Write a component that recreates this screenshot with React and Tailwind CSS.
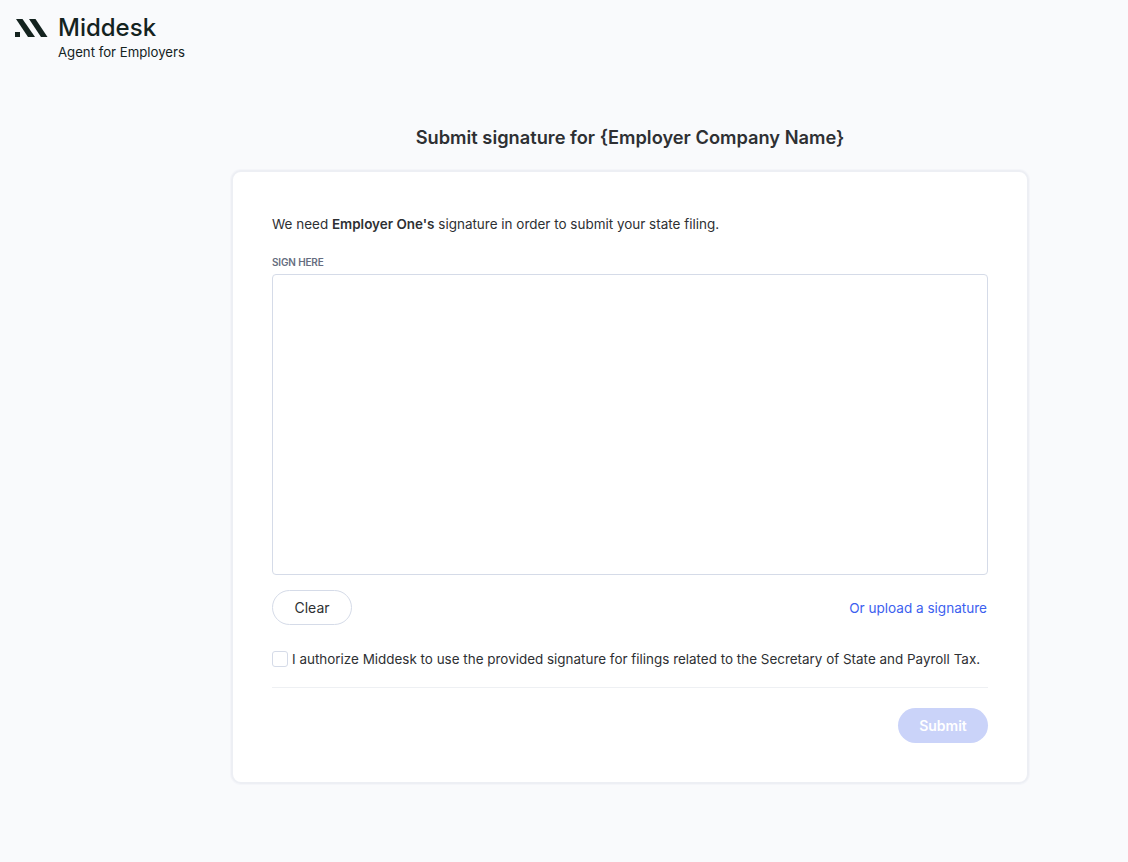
import React from "react";

function Logo() {
  return (
    <svg width="33" height="18" viewBox="0 0 33 18" fill="#14231f" className="shrink-0">
      <rect x="0" y="13" width="5" height="5" />
      <polygon points="1,0 7.5,0 20,18 13,18" />
      <polygon points="14,0 20.5,0 32.5,18 26,18" />
    </svg>
  );
}

export default function App() {
  return (
    <div className="min-h-[862px] bg-[#f9fafc] font-['Inter',sans-serif] text-[#2e3033]">
      <header className="h-[70px] pl-[15px] pt-[17px]">
        <div className="flex items-center gap-[10px] h-[22px]">
          <Logo />
          <span className="text-[24px] leading-[22px] font-[550] text-[#14231f]">Middesk</span>
        </div>
        <div className="pl-[43px] mt-[5px] text-[13.2px] leading-[16px] text-[#14231f]">Agent for Employers</div>
      </header>

      <main className="w-[798px] ml-[231px]">
        <h1 className="mt-[55px] h-[24px] text-center text-[18.25px] leading-[24px] font-semibold">
          Submit signature for {"{Employer Company Name}"}
        </h1>

        <div className="mt-[21px] h-[614px] bg-white border-2 border-[#edeff4] shadow-[0_0_0_1px_#f4f5f9] rounded-[10px] px-[39px] pt-[42px]">
          <p className="text-[13.47px] leading-5">
            We need <b className="font-semibold">Employer One's</b> signature in order to submit your state filing.
          </p>

          <label className="block mt-[21px] text-[10px] leading-[14px] font-semibold tracking-[-0.15px] uppercase text-[#666d80]">Sign here</label>
          <div className="mt-[5px] h-[301px] border border-[#d5dbe8] rounded-[4px] bg-white" />

          <div className="mt-[15px] flex items-center justify-between">
            <button type="button" className="w-[80px] h-[35px] rounded-full border border-[#d5dbe8] text-sm bg-white">
              Clear
            </button>
            <a className="pt-[2px] text-[13.55px] text-[#3d5fef] pr-px">Or upload a signature</a>
          </div>

          <label className="mt-[25px] flex items-center h-[18px] text-[13.44px] whitespace-nowrap">
            <span className="w-4 h-4 mr-[4px] border border-[#d5dbe8] rounded-[3px] bg-white" />
            I authorize Middesk to use the provided signature for filings related to the Secretary of State and Payroll Tax.
          </label>

          <div className="mt-[19px] border-t border-[#eef0f3]" />

          <div className="mt-[20px] flex justify-end">
            <button type="button" disabled className="w-[90px] h-[35px] rounded-full bg-[#cad3f9] text-white text-sm font-semibold">
              Submit
            </button>
          </div>
        </div>
      </main>
    </div>
  );
}
